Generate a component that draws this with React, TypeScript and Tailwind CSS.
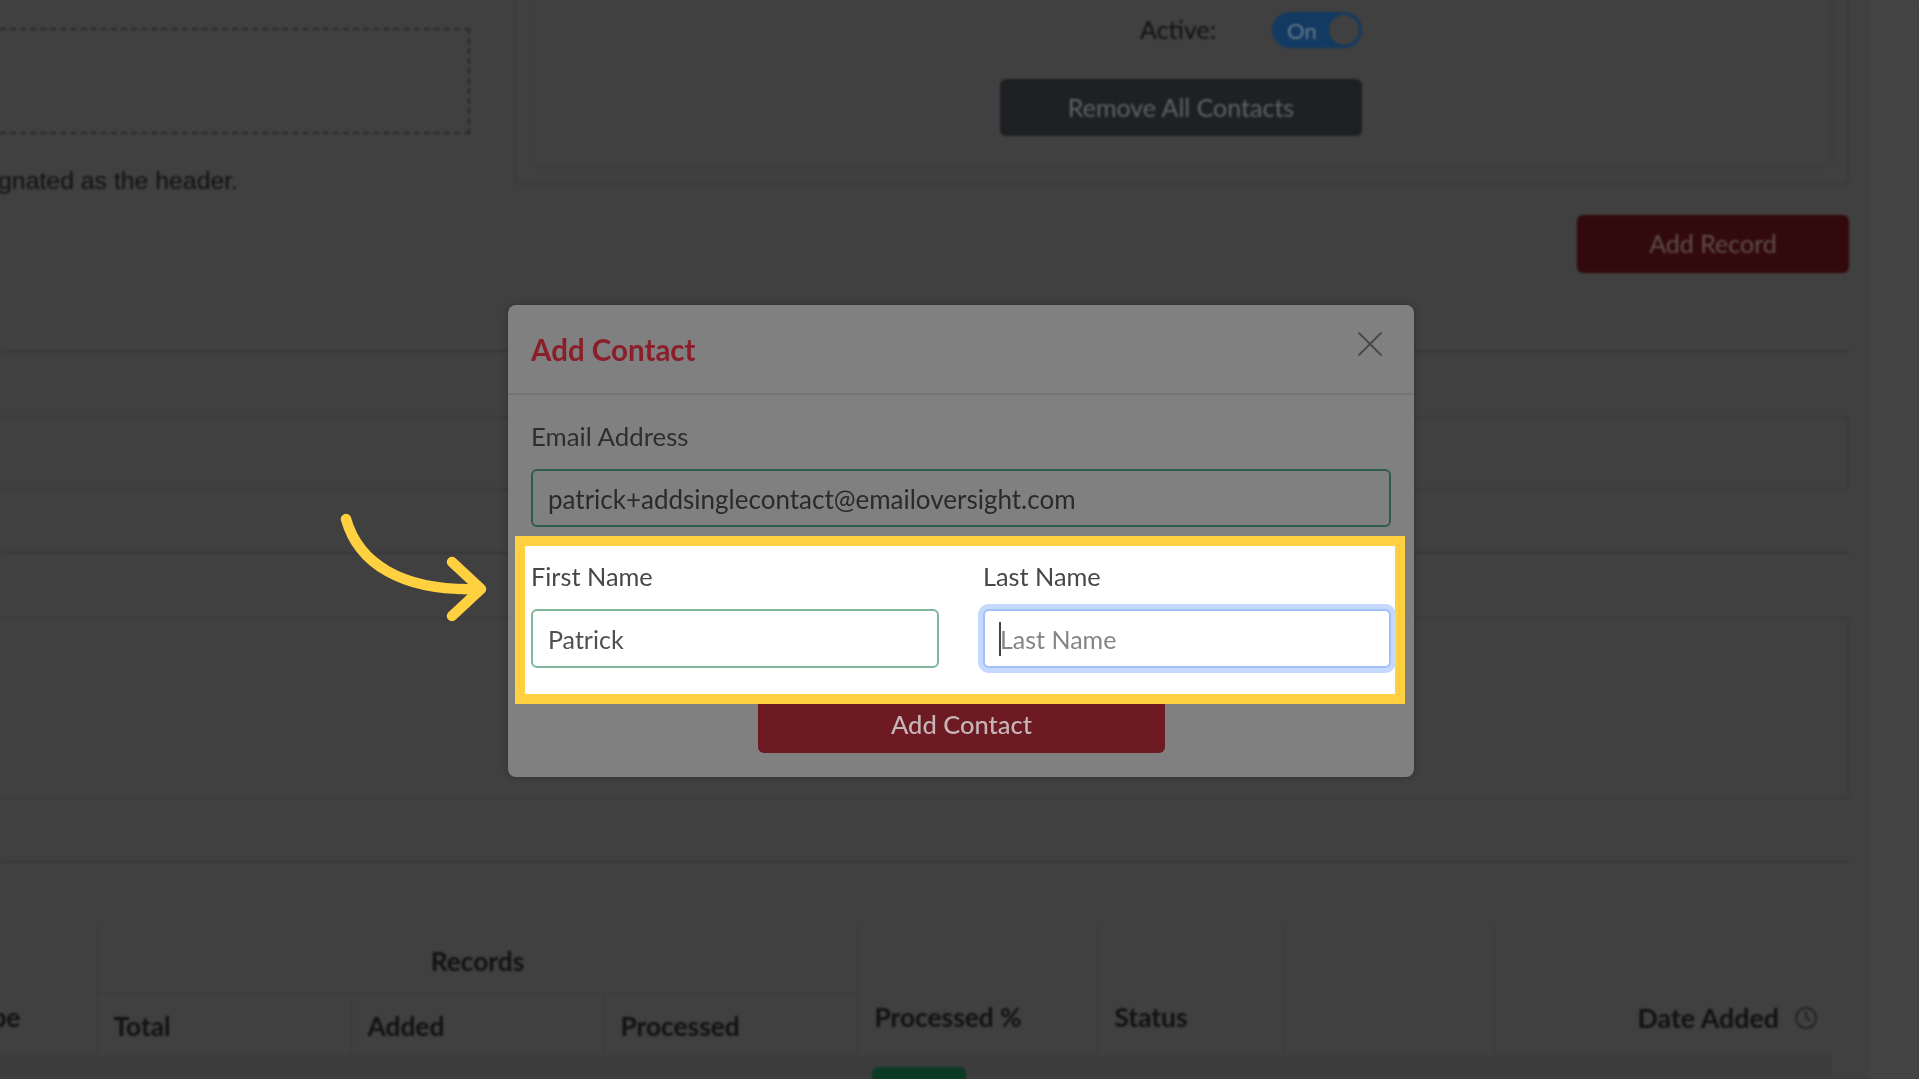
import { X, Clock } from 'lucide-react';

const LATO = 'font-["Lato","Noto_Sans",sans-serif]';

function Background() {
  return (
    <div className={`absolute inset-0 flex blur-[0.8px] ${LATO}`}>
      <div className="flex w-[1870px] flex-none flex-col">
        {/* upload area and list settings */}
        <div className="flex h-[185px] flex-none pr-[21px]">
          <div className="w-[514px] flex-none pt-[28px]">
            <div className="h-[106px] w-[470px] border-y-2 border-r-2 border-dashed border-[#2a2a2a]" />
            <div className="mt-[31px] flex w-[238px] justify-end whitespace-nowrap font-['Liberation_Sans',sans-serif] text-[24.8px] leading-[32px] text-[#0f1012]">
              designated as the header.
            </div>
          </div>
          <div className="flex-1 rounded-b-md border-x-2 border-b-2 border-[#3b3b3b] px-[14px]">
            <div className="flex h-[168px] flex-col items-end rounded-b-md border-x-2 border-b-2 border-[#39423c] pr-[469px] pt-[12px]">
              <div className="flex h-[36px] items-center">
                <span className="text-[25px] text-[#101113]">Active:</span>
                <div className="ml-[56px] flex h-[36px] w-[90px] items-center justify-between rounded-full bg-[#123a62] pl-[15px] pr-[3px]">
                  <span className="text-[22px] text-[#6a7a8a]">On</span>
                  <span className="h-[30px] w-[30px] rounded-full bg-[#404040]" />
                </div>
              </div>
              <button className="mt-[31px] h-[57px] w-[362px] rounded-md bg-[#1f2023] text-[25px] text-[#606264]">
                Remove All Contacts
              </button>
            </div>
          </div>
        </div>

        <div className="flex flex-none justify-end pr-[21px] pt-[30px]">
          <button className="h-[58px] w-[272px] rounded-md bg-[#330a0c] text-[25px] text-[#604e4e]">Add Record</button>
        </div>

        <div className="mr-[21px] mt-[77px] flex-none border-t-2 border-[#383838]" />
        <div className="mr-[21px] mt-[64px] h-[74px] flex-none rounded-r border-y-2 border-r-2 border-[#3b3b3b]" />
        <div className="mr-[21px] mt-[62px] flex-none border-t-2 border-[#383838]" />
        <div className="mr-[21px] mt-[63px] h-[182px] flex-none rounded-r border-y-2 border-r-2 border-[#3b3b3b]" />
        <div className="mr-[21px] mt-[62px] flex-none border-t-2 border-[#383838]" />

        {/* job table */}
        <table className="mt-[62px] w-[1849px] flex-none table-fixed border-collapse text-[26.3px] font-bold text-[#101114]">
          <colgroup>
            <col className="w-[97px]" />
            <col className="w-[254px]" />
            <col className="w-[253px]" />
            <col className="w-[254px]" />
            <col className="w-[240px]" />
            <col className="w-[185px]" />
            <col className="w-[211px]" />
            <col className="w-[355px]" />
          </colgroup>
          <thead>
            <tr className="h-[68px]">
              <th rowSpan={2} className="pt-[56px] text-left">
                <span className="-ml-[36px] block">Type</span>
              </th>
              <th colSpan={3} className="border-b border-l border-[#3a3a3a] pt-[6px] text-center">
                Records
              </th>
              <th rowSpan={2} className="border-l border-[#3a3a3a] pl-[16px] pt-[56px] text-left">
                Processed %
              </th>
              <th rowSpan={2} className="border-l border-[#3a3a3a] pl-[16px] pt-[56px] text-left">
                Status
              </th>
              <th rowSpan={2} className="border-l border-[#3a3a3a]" />
              <th rowSpan={2} className="border-l border-[#3a3a3a] pr-[31px] pt-[56px]">
                <span className="flex items-center justify-end gap-[15px] text-[26.8px]">
                  Date Added
                  <Clock className="h-[24px] w-[24px] text-[#1e1f22]" strokeWidth={1.7} />
                </span>
              </th>
            </tr>
            <tr className="h-[62px]">
              <th className="border-l border-[#3a3a3a] pl-[16px] pt-[4px] text-left">Total</th>
              <th className="border-l border-[#3a3a3a] pl-[16px] pt-[4px] text-left">Added</th>
              <th className="border-l border-[#3a3a3a] pl-[16px] pt-[4px] text-left">Processed</th>
            </tr>
          </thead>
        </table>
        <div className="h-[22px] w-[1831px] flex-none bg-[#3c3c3c] pl-[872px] pt-[12px]">
          <div className="h-[20px] w-[94px] rounded-md bg-[#0c3a24]" />
        </div>
      </div>
      <div className="flex-1 bg-[#444444]" />
    </div>
  );
}

function Modal() {
  return (
    <div className={`absolute inset-0 flex items-center justify-center pl-[3px] pt-[2px] ${LATO}`}>
      <div className="w-[906px] rounded-lg bg-[#808080] shadow-[0_0_6px_rgba(0,0,0,0.25)]">
        <div className="flex h-[90px] items-start justify-between border-b-2 border-[#737578] px-[23px] blur-[0.7px]">
          <h2 className="mt-[27px] text-[29.5px] font-bold leading-[36px] text-[#8a1f2a]">Add Contact</h2>
          <X className="-mr-[1px] mt-[17px] h-[44px] w-[44px] text-[#4a4a4a]" strokeWidth={1.1} />
        </div>

        <div className="px-[23px] pt-[27px] blur-[0.7px]">
          <label className="block text-[25.8px] leading-[28px] text-[#2e2e2e]">Email Address</label>
          <input
            readOnly
            value="patrick+addsinglecontact@emailoversight.com"
            className="mt-[19px] h-[58px] w-full rounded-md border-2 border-[#2f5c48] bg-transparent pl-[15px] pt-[3px] text-[26px] text-[#2a2a2a] outline-none"
          />
        </div>

        {/* yellow callout frame sits over the modal body and the button */}
        <div className="relative z-10 ml-[7px] mr-[9px] mt-[9px] border-[10px] border-[#ffd040] bg-white">
          <div className="grid h-[148px] grid-cols-2 gap-[44px] pl-[6px] pr-[4px] pt-[16px] blur-[0.7px]">
            <div>
              <label className="block text-[25.3px] leading-[28px] text-[#484848]">First Name</label>
              <input
                readOnly
                value="Patrick"
                className="mt-[19px] h-[59px] w-full rounded-md border-2 border-[#7fb89c] bg-white pl-[15px] pt-[2px] text-[25px] text-[#505050] outline-none"
              />
            </div>
            <div>
              <label className="block text-[25.3px] leading-[28px] text-[#484848]">Last Name</label>
              <div className="relative mt-[19px]">
                <input
                  readOnly
                  placeholder="Last Name"
                  className="h-[59px] w-full rounded-md border-2 border-[#a3bff8] bg-white pl-[15px] pt-[2px] text-[25px] text-[#555555] shadow-[0_0_0_5px_#c5d8fd] outline-none placeholder:text-[#858585]"
                />
                <span className="absolute left-[16px] top-[13px] h-[34px] w-[2px] bg-[#444444]" />
              </div>
            </div>
          </div>
        </div>

        <div className="-mt-[8px] flex justify-center pb-[24px] pl-[1px]">
          <button className="h-[57px] w-[407px] rounded-md bg-[#6e1a22] pt-[1px] text-[25.5px] font-medium text-[#c4b6b8] blur-[0.5px]">
            Add Contact
          </button>
        </div>
      </div>
    </div>
  );
}

export default function App() {
  return (
    <div className="relative h-screen w-full overflow-hidden bg-[#404040]">
      <Background />
      <Modal />
      <svg
        className="absolute left-[340px] top-[510px]"
        width="150"
        height="115"
        viewBox="0 0 150 115"
        fill="none"
        stroke="#ffd040"
        strokeWidth="10.5"
        strokeLinecap="round"
        strokeLinejoin="round"
      >
        <path d="M6 9C18 52 60 82 140 79" />
        <path d="M112 52L141 79L112 106" />
      </svg>
    </div>
  );
}
